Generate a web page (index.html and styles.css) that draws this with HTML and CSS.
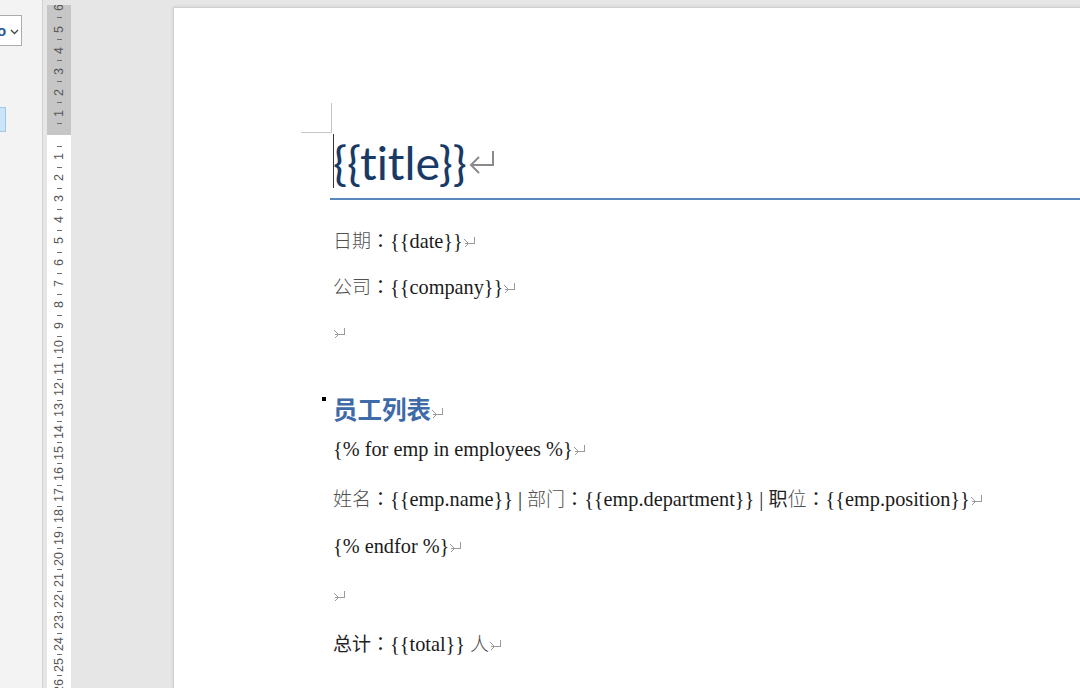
FILE: index.html
```html
<!DOCTYPE html>
<html lang="zh-CN">

<head>
  <meta charset="UTF-8">
  <title>模板</title>
  <link rel="stylesheet" href="styles.css">
</head>

<body>

  <aside class="nav">
    <div class="nav-select">
      <span class="nav-value">o</span>
      <svg class="chev" width="9" height="6" viewBox="0 0 9 6"><path d="M1 1 L4.5 4.5 L8 1" fill="none" stroke="#444" stroke-width="1.3"/></svg>
    </div>
    <div class="nav-item"></div>
  </aside>

  <div class="ruler">
    <div class="ruler-margin">
      <div class="cm"><span>1</span></div>
      <div class="cm"><span>2</span></div>
      <div class="cm"><span>3</span></div>
      <div class="cm"><span>4</span></div>
      <div class="cm"><span>5</span></div>
      <div class="cm"><span>6</span></div>
    </div>
    <div class="ruler-body" id="rulerBody"></div>
  </div>

  <main class="canvas">
    <div class="page">
      <div class="corner"></div>

      <h1 class="title"><span class="caret"></span>{{title}}<svg class="ret-big" width="28" height="26" viewBox="0 0 28 26"><path d="M25 2 V16 H3 M11 8 L3 16 L11 24" fill="none" stroke="#8a8a8a" stroke-width="2"/></svg></h1>

      <p><span class="zh light">日期</span><span class="colon" lang="ja">：</span>{{date}}<i class="ret"></i></p>
      <p><span class="zh light">公司</span><span class="colon" lang="ja">：</span>{{company}}<i class="ret"></i></p>
      <p><i class="ret"></i></p>

      <h2 class="heading"><span class="mark"></span>员工列表<i class="ret"></i></h2>
      <p>{% for emp in employees %}<i class="ret"></i></p>
      <p><span class="zh light">姓名</span><span class="colon" lang="ja">：</span>{{emp.name}} | <span class="zh light">部门</span><span class="colon" lang="ja">：</span>{{emp.department}} | <span class="zh">职</span><span class="zh light">位</span><span class="colon" lang="ja">：</span>{{emp.position}}<i class="ret"></i></p>
      <p>{% endfor %}<i class="ret"></i></p>
      <p><i class="ret"></i></p>
      <p><span class="zh">总计</span><span class="colon" lang="ja">：</span>{{total}} <span class="zh light">人</span><i class="ret"></i></p>
    </div>
  </main>

  <script>
    // vertical ruler numbers below the top margin
    const rulerBody = document.getElementById('rulerBody');
    for (let i = 1; i <= 27; i++) {
      const cm = document.createElement('div');
      cm.className = 'cm';
      cm.innerHTML = '<span>' + i + '</span>';
      rulerBody.appendChild(cm);
    }
  </script>

</body>

</html>
```

FILE: styles.css
```css
body {
  margin: 0;
  height: 688px;
  overflow: hidden;
  display: flex;
  background: #e6e6e6;
  font-family: 'Liberation Serif', 'Noto Sans CJK SC', serif;
}

/* left navigation pane */
.nav {
  width: 43px;
  flex-shrink: 0;
  background: #f3f3f3;
  border-right: 1px solid #d2d2d2;
  padding-top: 15px;
  box-sizing: border-box;
}

.nav-select {
  width: 22px;
  height: 31px;
  box-sizing: border-box;
  background: #fff;
  border: 1px solid #ababab;
  border-left: none;
  display: flex;
  align-items: center;
  overflow: hidden;
  font-family: 'Liberation Sans', sans-serif;
}

.nav-value {
  color: #2b579a;
  font-size: 15px;
  font-weight: bold;
  margin-left: -3px;
  width: 11px;
}

.chev {
  margin-left: 2px;
  margin-top: 2px;
}

.nav-item {
  width: 5px;
  height: 23px;
  margin-top: 61px;
  background: #cce4f7;
  border: 1px solid #9cc8ec;
  border-left: none;
}

/* vertical ruler */
.ruler {
  width: 24px;
  flex-shrink: 0;
  margin-left: 4px;
  padding-top: 5px;
  display: flex;
  flex-direction: column;
  font-family: 'Liberation Sans', sans-serif;
}

.ruler-margin {
  height: 130px;
  background: #c6c6c6;
  overflow: hidden;
  display: flex;
  flex-direction: column-reverse;
  padding-bottom: 10.6px;
  box-sizing: border-box;
  flex-shrink: 0;
}

.ruler-body {
  flex: 1;
  background: #fff;
  padding-top: 10.6px;
  overflow: hidden;
}

.cm {
  height: 21.2px;
  flex-shrink: 0;
  display: flex;
  align-items: center;
  justify-content: center;
  background: linear-gradient(#6f6f6f, #6f6f6f) no-repeat center top / 5px 1px;
}

.ruler-margin .cm {
  background-position: center bottom;
}

.cm span {
  writing-mode: vertical-rl;
  transform: rotate(180deg);
  font-size: 12.5px;
  line-height: 1;
  color: #555;
}

/* document area */
.canvas {
  flex: 1;
  padding: 7px 0 0 102px;
  overflow: hidden;
}

.page {
  height: 100%;
  background: #fff;
  border-top: 1px solid #d0d0d0;
  border-left: 1px solid #d0d0d0;
  box-shadow: 0 0 3px rgba(0, 0, 0, 0.12);
  padding: 95px 0 0 156px;
  box-sizing: border-box;
  color: #1b1b1b;
}

.corner {
  width: 30px;
  height: 29px;
  margin-left: -29px;
  border-right: 1px solid #c6c6c6;
  border-bottom: 1px solid #c6c6c6;
}

.title {
  margin: 1px 0 0;
  padding: 0 0 8px 3px;
  font-family: Lato, 'Open Sans', sans-serif;
  font-weight: 400;
  font-size: 46.5px;
  line-height: 56px;
  color: #1a3a66;
  font-variant-ligatures: none;
  border-bottom: 2px solid #5b87bf;
  white-space: nowrap;
}

.caret {
  display: inline-block;
  width: 0;
  height: 54px;
  border-left: 1px solid #333;
  vertical-align: top;
  margin-right: -1px;
}

.ret-big {
  vertical-align: 5px;
  margin-left: 1px;
}

p {
  margin: 0 0 16px 3px;
  font-size: 20.3px;
  line-height: 30px;
  height: 30px;
  white-space: nowrap;
}

.title + p {
  margin-top: 25px;
}

.heading ~ p {
  margin-bottom: 18.5px;
}

.zh,
.colon {
  font-family: 'Noto Sans CJK SC', sans-serif;
  font-size: 19px;
  color: #222;
}

.colon {
  font-family: 'Noto Sans CJK JP', sans-serif;
}

.zh.light {
  font-weight: 300;
  color: #505050;
}

.ret {
  display: inline-block;
  width: 11px;
  height: 10px;
  margin-left: 1px;
  vertical-align: 1px;
  background:
    linear-gradient(#9a9a9a, #9a9a9a) no-repeat right top / 1px 7px,
    linear-gradient(#9a9a9a, #9a9a9a) no-repeat left 1px top 6px / 10px 1px,
    linear-gradient(45deg, transparent 45%, #9a9a9a 45%, #9a9a9a 60%, transparent 60%) no-repeat left 0 top 2px / 4px 4px,
    linear-gradient(-45deg, transparent 45%, #9a9a9a 45%, #9a9a9a 60%, transparent 60%) no-repeat left 0 top 7px / 4px 4px;
}

.heading {
  margin: 47px 0 10px 3px;
  font-family: 'Noto Sans CJK SC', sans-serif;
  font-size: 24.5px;
  font-weight: bold;
  line-height: 30px;
  height: 30px;
  color: #3e6aa8;
}

.mark {
  display: inline-block;
  width: 4px;
  height: 4px;
  background: #000;
  margin-left: -11px;
  margin-right: 7px;
  vertical-align: 18px;
}
```
